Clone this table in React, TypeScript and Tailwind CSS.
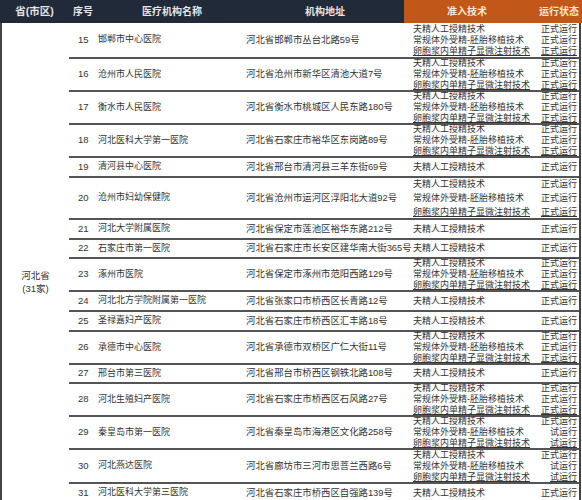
import React from 'react'

type Row = {
  no: number
  name: string
  addr: string
  techs: [string, string][]
  h: string
  lead?: string
}

const T1 = '夫精人工授精技术'
const T2 = '常规体外受精-胚胎移植技术'
const T3 = '卵胞浆内单精子显微注射技术'
const OK = '正式运行'
const TRY = '试运行'

const full: [string, string][] = [
  [T1, OK],
  [T2, OK],
  [T3, OK],
]
const one: [string, string][] = [[T1, OK]]
const trial: [string, string][] = [
  [T1, OK],
  [T2, TRY],
  [T3, TRY],
]

const rows: Row[] = [
  { no: 15, name: '邯郸市中心医院', addr: '河北省邯郸市丛台北路59号', techs: full, h: 'h-[34px]' },
  { no: 16, name: '沧州市人民医院', addr: '河北省沧州市新华区清池大道7号', techs: full, h: 'h-[33px]' },
  { no: 17, name: '衡水市人民医院', addr: '河北省衡水市桃城区人民东路180号', techs: full, h: 'h-[33px]' },
  { no: 18, name: '河北医科大学第一医院', addr: '河北省石家庄市裕华区东岗路89号', techs: full, h: 'h-[33px]' },
  { no: 19, name: '清河县中心医院', addr: '河北省邢台市清河县三羊东街69号', techs: one, h: 'h-[20px]' },
  { no: 20, name: '沧州市妇幼保健院', addr: '河北省沧州市运河区浮阳北大道92号', techs: full, h: 'h-[42px]', lead: 'leading-[14px]' },
  { no: 21, name: '河北大学附属医院', addr: '河北省保定市莲池区裕华东路212号', techs: one, h: 'h-[20px]' },
  { no: 22, name: '石家庄市第一医院', addr: '河北省石家庄市长安区建华南大街365号', techs: one, h: 'h-[19px]' },
  { no: 23, name: '涿州市医院', addr: '河北省保定市涿州市范阳西路129号', techs: full, h: 'h-[33px]' },
  { no: 24, name: '河北北方学院附属第一医院', addr: '河北省张家口市桥西区长青路12号', techs: one, h: 'h-[20px]' },
  { no: 25, name: '圣禄嘉妇产医院', addr: '河北省石家庄市桥西区汇丰路18号', techs: one, h: 'h-[20px]' },
  { no: 26, name: '承德市中心医院', addr: '河北省承德市双桥区广仁大街11号', techs: full, h: 'h-[33px]' },
  { no: 27, name: '邢台市第三医院', addr: '河北省邢台市桥西区钢铁北路108号', techs: one, h: 'h-[19px]' },
  { no: 28, name: '河北生殖妇产医院', addr: '河北省石家庄市桥西区石风路27号', techs: full, h: 'h-[33px]' },
  { no: 29, name: '秦皇岛市第一医院', addr: '河北省秦皇岛市海港区文化路258号', techs: trial, h: 'h-[33px]' },
  { no: 30, name: '河北燕达医院', addr: '河北省廊坊市三河市思菩兰西路6号', techs: trial, h: 'h-[34px]' },
  { no: 31, name: '河北医科大学第三医院', addr: '河北省石家庄市桥西区自强路139号', techs: one, h: 'h-[20px]' },
]

const sans = { fontFamily: '"Liberation Sans", "Noto Sans CJK SC", sans-serif' }

export default function App() {
  return (
    <div className="w-[582px] h-[500px] overflow-hidden bg-white text-[#333]" style={sans}>
      {/* header */}
      <div className="flex h-[23px] text-[10px] font-bold leading-[23px]">
        <div className="flex bg-[#212a39] text-[#e6e6e6] w-[404px]">
          <div className="w-[69px] text-center text-[10.5px]">省(市区)</div>
          <div className="w-[29px] pl-[4px]">序号</div>
          <div className="w-[148px] text-center">医疗机构名称</div>
          <div className="flex-1 text-center">机构地址</div>
        </div>
        <div className="flex flex-1 bg-[#c2571a] text-[#fbe6d6]">
          <div className="w-[126px] text-center">准入技术</div>
          <div className="flex-1 text-right pr-[3px]">运行状态</div>
        </div>
      </div>

      {/* body */}
      <div className="flex border-r-2 border-[#444] w-[581px]">
        <div className="w-[69px] shrink-0 border-l-2 border-[#444] pt-[246px] text-center text-[9.5px] leading-[13px]">
          <div>河北省</div>
          <div>(31家)</div>
        </div>
        <div className="flex-1">
          {rows.map((r, i) => (
            <div
              key={r.no}
              className={`flex items-center text-[9px] ${r.h} ${i === 0 ? '' : 'border-t-2 border-[#555]'}`}
            >
              <div className="w-[29px] shrink-0 pl-[9px] text-[9.5px]">{r.no}</div>
              <div className="w-[148px] shrink-0 whitespace-nowrap text-[9px]">{r.name}</div>
              <div className="w-[158px] shrink-0 whitespace-nowrap text-[9.4px]">{r.addr}</div>
              <div className={`flex-1 pl-[9px] ${r.lead ?? 'leading-[11px]'}`}>
                {r.techs.map(([t, s], k) => (
                  <div key={k} className={`flex justify-between whitespace-nowrap ${k === 2 ? 'underline' : ''}`}>
                    <span>{t}</span>
                    <span className="pr-[2px]">{s}</span>
                  </div>
                ))}
              </div>
            </div>
          ))}
        </div>
      </div>
    </div>
  )
}
